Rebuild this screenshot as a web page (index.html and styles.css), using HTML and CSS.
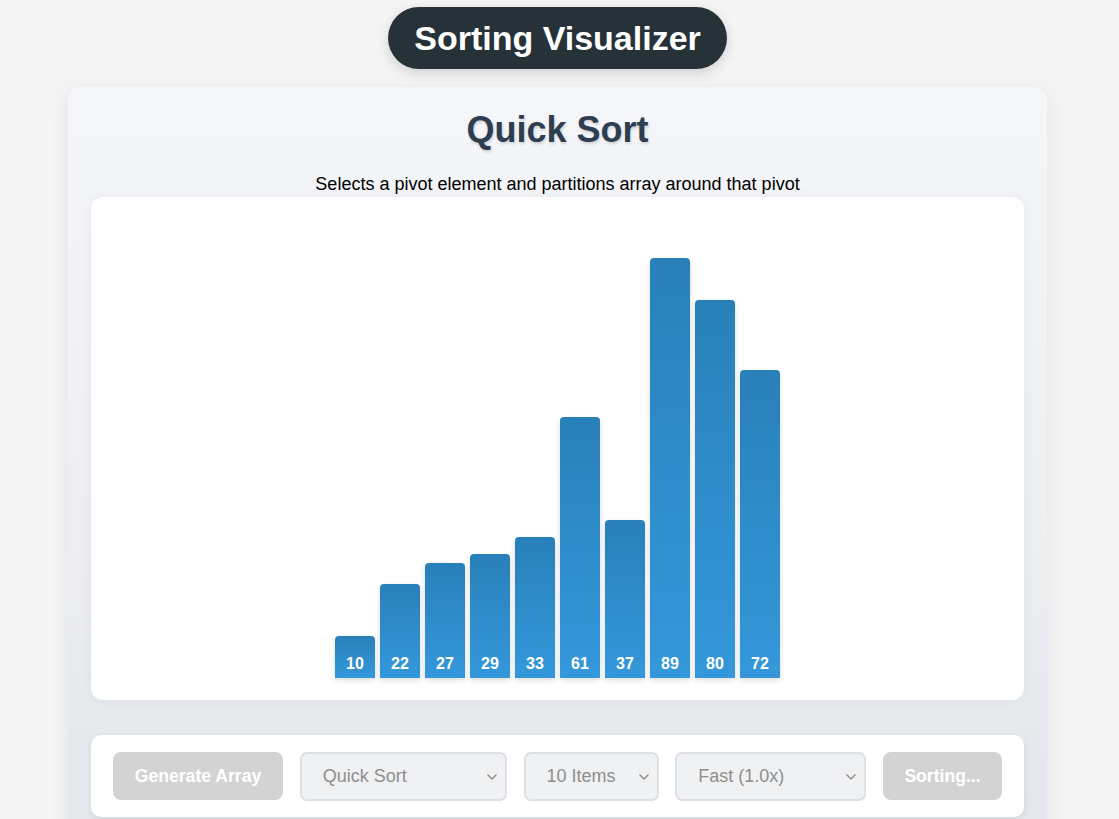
FILE: index.html
```html
<!DOCTYPE html>
<html lang="en">
<head>
<meta charset="utf-8">
<title>Sorting Visualizer</title>
<link rel="stylesheet" href="styles.css">
</head>
<body>
<div class="app">
  <header class="header">
    <h1 class="title">Sorting Visualizer</h1>
  </header>
  <main class="card">
    <h2 class="algo-name">Quick Sort</h2>
    <p class="algo-desc">Selects a pivot element and partitions array around that pivot</p>
    <section class="viz">
      <div class="bars">
        <div class="bar" style="height:42px"><span class="bar-label">10</span></div>
        <div class="bar" style="height:94px"><span class="bar-label">22</span></div>
        <div class="bar" style="height:115px"><span class="bar-label">27</span></div>
        <div class="bar" style="height:124px"><span class="bar-label">29</span></div>
        <div class="bar" style="height:141px"><span class="bar-label">33</span></div>
        <div class="bar" style="height:261px"><span class="bar-label">61</span></div>
        <div class="bar" style="height:158px"><span class="bar-label">37</span></div>
        <div class="bar" style="height:420px"><span class="bar-label">89</span></div>
        <div class="bar" style="height:378px"><span class="bar-label">80</span></div>
        <div class="bar" style="height:308px"><span class="bar-label">72</span></div>
      </div>
    </section>
    <section class="controls">
      <button class="btn btn-generate" disabled>Generate Array</button>
      <div class="select-wrap select-algo">
        <select class="select" disabled>
          <option>Quick Sort</option>
        </select>
        <svg class="chevron" width="10" height="6" viewBox="0 0 10 6" aria-hidden="true"><path d="M1 1 L5 5 L9 1" fill="none" stroke="#8e8e8e" stroke-width="1.5" stroke-linecap="round" stroke-linejoin="round"/></svg>
      </div>
      <div class="select-wrap select-size">
        <select class="select" disabled>
          <option>10 Items</option>
        </select>
        <svg class="chevron" width="10" height="6" viewBox="0 0 10 6" aria-hidden="true"><path d="M1 1 L5 5 L9 1" fill="none" stroke="#8e8e8e" stroke-width="1.5" stroke-linecap="round" stroke-linejoin="round"/></svg>
      </div>
      <div class="select-wrap select-speed">
        <select class="select" disabled>
          <option>Fast (1.0x)</option>
        </select>
        <svg class="chevron" width="10" height="6" viewBox="0 0 10 6" aria-hidden="true"><path d="M1 1 L5 5 L9 1" fill="none" stroke="#8e8e8e" stroke-width="1.5" stroke-linecap="round" stroke-linejoin="round"/></svg>
      </div>
      <button class="btn btn-sort" disabled>Sorting...</button>
    </section>
  </main>
</div>
</body>
</html>
```
FILE: styles.css
```css
html, body {
  margin: 0;
  padding: 0;
  background: #f4f4f4;
  font-family: "Liberation Sans", Arial, sans-serif;
}

.app {
  width: 1115px;
  display: flex;
  flex-direction: column;
  align-items: center;
  padding-top: 7px;
}

.header {
  display: flex;
  justify-content: center;
}

.title {
  margin: 0;
  background: #263238;
  color: #ffffff;
  font-size: 34px;
  font-weight: bold;
  line-height: 40px;
  padding: 11px 26px;
  border-radius: 31px;
  box-shadow: 0 4px 12px rgba(0, 0, 0, 0.15);
}

.card {
  margin-top: 18px;
  width: 979px;
  box-sizing: border-box;
  padding: 22px 23px 30px;
  border-radius: 14px;
  background: linear-gradient(to bottom, #f5f6f9 0%, #eceef2 60%, #e5e8ec 85%, #e3e6ea 100%);
  box-shadow: 0 6px 20px rgba(0, 0, 0, 0.08);
}

.algo-name {
  margin: 0 0 24px;
  text-align: center;
  font-size: 36px;
  line-height: 41px;
  font-weight: bold;
  color: #2c3e50;
  text-shadow: 1px 2px 3px rgba(0, 0, 0, 0.15);
}

.algo-desc {
  margin: 0 0 3px;
  text-align: center;
  font-size: 18px;
  line-height: 20px;
  color: #000000;
}

.viz {
  height: 503px;
  background: #ffffff;
  border-radius: 12px;
  box-shadow: 0 0 12px rgba(0, 0, 0, 0.05);
  display: flex;
  justify-content: center;
  align-items: flex-end;
  box-sizing: border-box;
  padding-bottom: 22px;
}

.bars {
  display: flex;
  align-items: flex-end;
  gap: 5px;
}

.bar {
  width: 40px;
  border-radius: 4px 4px 0 0;
  background: linear-gradient(to top, #3498db 0%, #2980b9 100%);
  box-shadow: 0 2px 5px rgba(0, 0, 0, 0.15);
  display: flex;
  flex-direction: column;
  justify-content: flex-end;
  align-items: center;
  box-sizing: border-box;
  padding-bottom: 5px;
}

.bar-label {
  color: #ffffff;
  font-weight: bold;
  font-size: 16px;
  line-height: 18px;
}

.controls {
  margin-top: 35px;
  background: #ffffff;
  border-radius: 10px;
  box-shadow: 0 2px 6px rgba(0, 0, 0, 0.08);
  display: flex;
  align-items: center;
  justify-content: space-between;
  padding: 16px 22px 16px;
  height: 82px;
  box-sizing: border-box;
}

.btn {
  height: 48px;
  border: none;
  border-radius: 8px;
  background: #d3d3d3;
  color: #ffffff;
  font-family: "Liberation Sans", Arial, sans-serif;
  font-size: 17.6px;
  font-weight: bold;
  padding: 0 21px;
}

.btn-generate {
  width: 170px;
}

.btn-sort {
  width: 119px;
}

.select-wrap {
  position: relative;
  height: 49px;
}

.select {
  -webkit-appearance: none;
  appearance: none;
  width: 100%;
  height: 49px;
  box-sizing: border-box;
  border: 2px solid #dde0e4;
  border-radius: 7px;
  background-color: #f0f1f3;
  color: #8e8e8e;
  font-family: "Liberation Sans", Arial, sans-serif;
  font-size: 18px;
  padding: 0 30px 0 21px;
  opacity: 1;
  margin: 0;
}

.chevron {
  position: absolute;
  right: 10px;
  top: 22px;
  pointer-events: none;
}

.select-algo {
  width: 207px;
}

.select-size {
  width: 135px;
}

.select-speed {
  width: 191px;
}
```
